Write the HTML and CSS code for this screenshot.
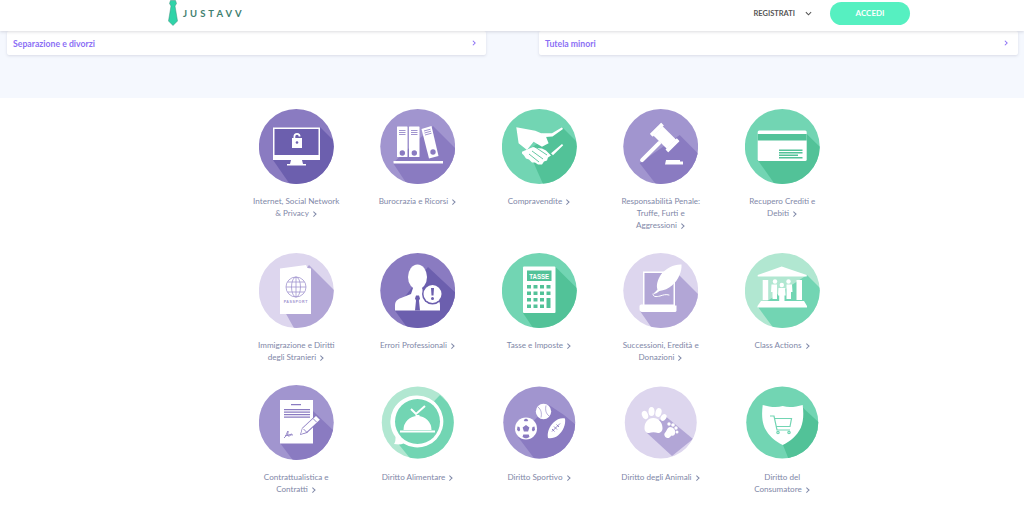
FILE: index.html
```html
<!DOCTYPE html>
<html>
<head>
    <meta charset="utf-8">
    <title>JustAvv</title>
    <meta name="viewport" content="width=device-width, initial-scale=1.0">
    <link rel="stylesheet" href="styles.css">
</head>
<body>
    <header class="topbar">
        <a class="logo">
            <svg class="logo-tie" viewBox="0 0 10 26">
                <path d="M2.500 0.500h5l1 3-1.500 2.500 2.500 15-4.500 4.500-4.500-4.500 2.500-15-1.500-2.500z"/>
            </svg>
            <span class="logo-name">JUSTAVV</span>
        </a>
        <nav class="topnav">
            <span class="register">REGISTRATI</span>
            <svg class="register-arrow" viewBox="0 0 8 5"><path d="M1 1l3 3 3-3"/></svg>
            <a class="login">ACCEDI</a>
        </nav>
    </header>

    <section class="band">
        <a class="card"><span>Separazione e divorzi</span><svg class="card-arrow" viewBox="0 0 5 8"><path d="M1 1l3 3-3 3"/></svg></a>
        <a class="card"><span>Tutela minori</span><svg class="card-arrow" viewBox="0 0 5 8"><path d="M1 1l3 3-3 3"/></svg></a>
    </section>

    <main class="areas">
        <a class="area">
            <svg class="area-icon violet" viewBox="0 0 75 75">
                <polygon class="sh" points="61,18 110,67 60,117 14,51"/>
                <rect class="sh" x="15" y="19.500" width="45" height="27"/>
                <path fill-rule="evenodd" d="M14 18.500h47v32.500h-18l1 4h3v1.500h-19v-1.500h3l1-4h-18zM15.500 20v26h44v-26z"/>
                <path d="M33 29h10v10h-10zM34.500 29v-1.500a3.500 3.500 0 0 1 7 0h-1.800a1.700 1.700 0 0 0-3.400 0v1.500z"/>
                <circle class="sh" cx="38" cy="33.500" r="1.300"/>
            </svg>
            <span class="area-label">Internet, Social Network<br>&amp; Privacy <i></i></span>
        </a>
        <a class="area">
            <svg class="area-icon lilac" viewBox="0 0 75 75">
                <polygon class="sh" points="53,17 100,64 50,110 13,54"/>
                <rect x="17" y="17.500" width="10.500" height="30.500" rx="0.500"/>
                <rect x="29" y="17.500" width="10.500" height="30.500" rx="0.500"/>
                <polygon points="41.500,20 51.500,17 58.500,47 49,49.500"/>
                <rect x="13.500" y="52" width="49.500" height="2.500"/>
                <circle class="sh" cx="22.300" cy="44" r="2.700"/>
                <circle class="sh" cx="34.300" cy="44" r="2.700"/>
                <circle class="sh" cx="53" cy="43" r="2.700"/>
                <path class="line" d="M19 21.500h6.500M19 23.500h6.500M19 25.500h6.500M31 21.500h6.500M31 23.500h6.500M31 25.500h6.500M44 22l6.500-1.800M44.500 24l6.500-1.800M45 26l6.500-1.800"/>
            </svg>
            <span class="area-label">Burocrazia e Ricorsi <i></i></span>
        </a>
        <a class="area">
            <svg class="area-icon green" viewBox="0 0 75 75">
                <polygon class="sh" points="60,18 110,68 60,118 26,41"/>
                <path d="M14.300 18.300l19 3.400 10 4.300 3.300 8.300-6.600 3.400-8.400-5-6.600 8.300-8.400-6.700z"/>
                <path d="M39 24.300h11l10-6 1 1.700-10.500 7.500-7.500 0.500z"/>
                <path d="M60 35l1.200 1.300-10.200 10-2-2z"/>
                <path d="M20 42.700l11-4.700 4 1 5 0.500 4 2 5 5-3 2-1 3-3 1-2 3h-4l-3-2-3 0-3-3-3-1-2-3-2-2z"/>
                <path class="sh-line" d="M30 42l11 8M27 45l10 8M33 38l12 8"/>
            </svg>
            <span class="area-label">Compravendite <i></i></span>
        </a>
        <a class="area">
            <svg class="area-icon lilac" viewBox="0 0 75 75">
                <polygon class="sh" points="56.700,26 100,70 60,110 16.700,54.300"/>
                <g transform="translate(41.700 28.500) rotate(45)">
                    <rect x="-13" y="-8" width="4" height="16" rx="0.500"/>
                    <rect x="-9.500" y="-6.500" width="19" height="13"/>
                    <rect x="9" y="-8" width="4" height="16" rx="0.500"/>
                    <rect x="-2" y="6" width="4" height="28" rx="2"/>
                </g>
                <path d="M43 51h14v1.500h3v3h-18z"/>
            </svg>
            <span class="area-label">Responsabilità Penale:<br>Truffe, Furti e<br>Aggressioni <i></i></span>
        </a>
        <a class="area">
            <svg class="area-icon green" viewBox="0 0 75 75">
                <polygon class="sh" points="61.700,25 110,72 60,118 12.700,51"/>
                <rect x="12.700" y="21.500" width="49" height="30.500" rx="1.500"/>
                <rect class="sh" x="12.700" y="25" width="49" height="6.500"/>
                <path class="sh" d="M34 40.500h23.500v1.400h-23.500zM34 43h23.500v1.400h-23.500zM34 45.500h19v1.400h-19zM34 48h23.500v1.400h-23.500z"/>
            </svg>
            <span class="area-label">Recupero Crediti e<br>Debiti <i></i></span>
        </a>

        <a class="area">
            <svg class="area-icon pale" viewBox="0 0 75 75">
                <polygon class="sh" points="50,12 110,72 60,120 21,50"/>
                <path d="M21 15.500l26-3.500 1.500 3 3.500 0.500v45.500h-31z"/>
                <g class="globe">
                    <circle cx="37" cy="34" r="10"/>
                    <ellipse cx="37" cy="34" rx="4.500" ry="10"/>
                    <path d="M27 34h20M28.500 29h17M28.500 39h17M37 24v20"/>
                </g>
                <text class="passport" x="36.800" y="49.500">PASSPORT</text>
            </svg>
            <span class="area-label">Immigrazione e Diritti<br>degli Stranieri <i></i></span>
        </a>
        <a class="area">
            <svg class="area-icon violet" viewBox="0 0 75 75">
                <polygon class="sh" points="48,14 110,72 60,120 14.500,57"/>
                <ellipse cx="37.500" cy="24" rx="9.500" ry="12.500"/>
                <path d="M15 57.500v-5c0-4 2-6 6-7.500l10-4 2-6h9l2 6 10 4c4 1.500 6 3.500 6 7.500v5z"/>
                <path class="sh" d="M36 42.500h3l1 3-1 2 1 10h-5l1-10-1-2z"/>
                <circle class="sh" cx="52.500" cy="41" r="10.500"/>
                <circle cx="52.500" cy="41" r="9"/>
                <path class="sh" d="M51 35h3l-0.500 7.500h-2zM52.500 44a1.500 1.500 0 1 1 0 3 1.500 1.500 0 0 1 0-3z"/>
            </svg>
            <span class="area-label">Errori Professionali <i></i></span>
        </a>
        <a class="area">
            <svg class="area-icon green" viewBox="0 0 75 75">
                <polygon class="sh" points="53,13.500 110,70 60,118 21,60"/>
                <rect x="21" y="13.500" width="32.500" height="46.500" rx="1"/>
                <rect class="sh" x="25" y="17.500" width="24.500" height="10.500"/>
                <text class="calc-text" x="37.200" y="25.800" textLength="20" lengthAdjust="spacingAndGlyphs">TASSE</text>
                <path class="sh" d="M25 32h4v3.500h-4zM31.500 32h4v3.500h-4zM38 32h4v3.500h-4zM44.500 32h4v3.500h-4zM25 38.500h4v3.500h-4zM31.500 38.500h4v3.500h-4zM38 38.500h4v3.500h-4zM44.500 38.500h4v3.500h-4zM25 45h4v3.500h-4zM31.500 45h4v3.500h-4zM38 45h4v3.500h-4zM44.500 45h4v10h-4zM25 51.500h4v3.500h-4zM31.500 51.500h4v3.500h-4zM38 51.500h4v3.500h-4z"/>
            </svg>
            <span class="area-label">Tasse e Imposte <i></i></span>
        </a>
        <a class="area">
            <svg class="area-icon pale" viewBox="0 0 75 75">
                <polygon class="sh" points="52,18 110,76 60,120 17,58"/>
                <rect class="sh" x="20.500" y="19" width="31" height="33"/>
                <path fill-rule="evenodd" d="M20 18.500h32v34h1.500v5c0 1-1 1.500-2 1.500h-32.500c-1.500 0-2.500-1-2.500-3v-2.500c0-1.500 1-2 2.500-2h1zM21.500 20v31.500h29v-31.500z"/>
                <path d="M58.500 11.500c0.500 7-3 15.500-9.500 21-3.500 3-8 5-12.500 5.500-2 1.500-3.500 2.500-5.500 3l-0.500-0.500c1.500-1.200 3-2.500 4-4-1.500-4 0-10 3.500-15 5-6.500 13.500-10.500 20.500-10z"/>
                <path class="stroke thin" d="M30 41c0 3 3 3 7 2 3-1 6-2 9-1"/>
            </svg>
            <span class="area-label">Successioni, Eredità e<br>Donazioni <i></i></span>
        </a>
        <a class="area">
            <svg class="area-icon mint" viewBox="0 0 75 75">
                <polygon class="sh" points="62,22 110,70 60,118 13,54"/>
                <path d="M36.700 13.500l25 8.500v1.500h-49v-1.500z"/>
                <rect x="17.700" y="27" width="5.500" height="20"/>
                <rect x="51.500" y="27" width="5.500" height="20"/>
                <path d="M16 48h43l3 5v1.500h-49.500v-1.500z"/>
                <circle cx="30" cy="28.500" r="2.200"/>
                <circle cx="43.500" cy="28.500" r="2.200"/>
                <circle cx="36.800" cy="32" r="2.200"/>
                <path d="M26.500 31.500h5.500v14.500h-4.500v-7h-1.500zM41.500 31.500h5.500l0.500 7.500h-1.500v7h-4.500z"/>
                <path d="M33.500 35h6.700l0.500 7.500h-1.200v6h-5.300v-6h-1.200z"/>
            </svg>
            <span class="area-label">Class Actions <i></i></span>
        </a>

        <a class="area">
            <svg class="area-icon lilac" viewBox="0 0 75 75">
                <polygon class="sh" points="54,26 100,70 60,110 21,58"/>
                <rect x="21" y="15" width="33" height="43.500"/>
                <path class="sh" d="M32 19h10v1.200h-10zM25 24h26v1.200h-26zM25 26.500h26v1.200h-26zM25 29h26v1.200h-26zM25 31.500h26v1.200h-26z"/>
                <path class="pen-back" d="M41 50l2-7 14-13 5 5-14 13z"/>
                <path d="M42 49l1.500-5.500 13.500-12.500 3.800 3.800-13.500 12.500z"/>
                <path class="sh-line" d="M54 33.500l3.800 3.800M44.500 44l3.500 3.500"/>
                <path class="sh-line" d="M25 53c2-1 3-6 4-7 0.500 1-1 4 0 5 2 0.500 3-2 5-1M26 51l7-2"/>
            </svg>
            <span class="area-label">Contrattualistica e<br>Contratti <i></i></span>
        </a>
        <a class="area">
            <svg class="area-icon mint small" viewBox="0 0 75 75">
                <polygon class="sh" points="60,10 110,60 60,110 16,56"/>
                <path fill-rule="evenodd" d="M37.500 10.500a26 26 0 1 1-14 48c-3 1.500-6 1-9.500 0.500 1.500-2 1.500-4 1.500-7a26 26 0 0 1 22-41.500z"/>
                <circle class="sh" cx="37.500" cy="36.500" r="22.500"/>
                <path class="check" d="M31 24l5 5 9-8"/>
                <path d="M23.500 45a14 14 0 0 1 28 0zM35.500 30h4v2h-4zM20 45.500h35v2h-35z"/>
            </svg>
            <span class="area-label">Diritto Alimentare <i></i></span>
        </a>
        <a class="area">
            <svg class="area-icon lilac small" viewBox="0 0 75 75">
                <polygon class="sh" points="47,20 62,30 110,70 60,110 16,52"/>
                <circle cx="24" cy="43.500" r="11"/>
                <path class="sh" d="M24 40l3.400 2.500-1.300 4h-4.200l-1.300-4zM24 33.500l2.300 1.500-0.800 1.200h-3l-0.800-1.200zM15.500 41.500l2 0.500 0.700 3-1.200 1.500-2-1.600zM32.500 41.500l-2 0.500-0.700 3 1.200 1.500 2-1.600zM20.500 52l0.800-2.500h5.400l0.800 2.500-2.500 1.300h-2z"/>
                <circle cx="41.500" cy="26.500" r="7.700"/>
                <path class="sh-line fine" d="M36 22c3 2.500 4 6 3 10.500M47 31c-3-2.500-4-6-3-10.500"/>
                <path d="M63 33.500c1 6-2 13-7 17-3 2.500-7 3-10 2.500-1-5 1-11 5.500-15.500 3.500-3.500 8-5 11.500-4z"/>
                <path class="sh-line" d="M50 46.500l8-8M52 41.500l3 3M50 44l2.500 2.500M54.500 39.500l2.500 2.500"/>
            </svg>
            <span class="area-label">Diritto Sportivo <i></i></span>
        </a>
        <a class="area">
            <svg class="area-icon pale small" viewBox="0 0 75 75">
                <polygon class="sh" points="41,30 70,54 49,71 24,48"/>
                <ellipse cx="22" cy="30" rx="3" ry="4.300" transform="rotate(-20 22 30)"/>
                <ellipse cx="28.500" cy="26.500" rx="3" ry="4.500"/>
                <ellipse cx="35.500" cy="27.500" rx="3" ry="4.500" transform="rotate(15 35.500 27.500)"/>
                <ellipse cx="40.500" cy="32.500" rx="2.600" ry="3.800" transform="rotate(35 40.500 32.500)"/>
                <path d="M30.500 33c5 0 9 4.500 9 10 0 3.500-2 5-4.500 5-1.500 0-3-0.700-4.500-0.700s-3 0.700-4.500 0.700c-2.500 0-4.500-1.500-4.500-5 0-5.500 3.500-10 8.500-10z"/>
                <circle cx="46" cy="39" r="1.700"/>
                <circle cx="50" cy="40" r="1.800"/>
                <circle cx="53" cy="43" r="1.700"/>
                <circle cx="54" cy="47" r="1.500"/>
                <path d="M47 42c3.500 0 6 3 5 6.500-0.500 2-2 2.500-3.500 2l-2 2c-1.500 1-3.500 0.500-4.500-1-1.500-2-0.500-3.500 1-5 1-2 2-4.500 4-4.500z"/>
            </svg>
            <span class="area-label">Diritto degli Animali <i></i></span>
        </a>
        <a class="area">
            <svg class="area-icon green small" viewBox="0 0 75 75">
                <polygon class="sh" points="57,22 110,70 60,115 38,60"/>
                <path d="M17.700 20c7 2 14 3 20 1 6 2 13 1 20-1 1 8 1 16-2 23-4 8-10 13-18 17-8-4-14-9-18-17-3-7-3-15-2-23z"/>
                <g class="cart">
                    <path d="M25 31h4l3 14h13"/>
                    <path d="M29.500 33.500h17l-1.500 8h-14"/>
                    <circle cx="33" cy="47.500" r="1.200"/>
                    <circle cx="44" cy="47.500" r="1.200"/>
                </g>
            </svg>
            <span class="area-label">Diritto del<br>Consumatore <i></i></span>
        </a>
    </main>
</body>
</html>
```
FILE: styles.css
```css
* {
    box-sizing: border-box;
}

html, body {
    height: 509px;
}

body {
    margin: 0;
    background-color: white;
    font-family: 'Lato', 'Open Sans', sans-serif;
    overflow: hidden;
}

.topbar {
    position: relative;
    z-index: 10;
    height: 31px;
    padding: 0 114px 0 168px;
    display: flex;
    align-items: center;
    justify-content: space-between;
    background-color: white;
    box-shadow: 0 1px 3px rgba(60, 60, 80, 0.18);
}

.logo {
    display: flex;
    align-items: center;
    gap: 5px;
    margin-top: -5px;
}

.logo-tie {
    width: 10px;
    height: 26px;
    fill: #2fd3a8;
    stroke: #3f8f7c;
    stroke-width: 0.5;
}

.logo-name {
    font-size: 9.500px;
    font-weight: 700;
    letter-spacing: 3px;
    color: #3f7f70;
}

.topnav {
    display: flex;
    align-items: center;
    margin-top: -5px;
}

.register {
    font-size: 7.500px;
    font-weight: 700;
    color: #555;
}

.register-arrow {
    width: 7px;
    height: 5px;
    margin: 0 18px 0 10px;
    fill: none;
    stroke: #555;
    stroke-width: 1.200;
}

.login {
    width: 80px;
    height: 23px;
    border-radius: 12px;
    background-color: #56f0c1;
    color: white;
    font-size: 8px;
    font-weight: 700;
    line-height: 23px;
    text-align: center;
}

.band {
    height: 67px;
    padding: 0 6px 0 7px;
    display: flex;
    gap: 53px;
    background-color: #f5f8fe;
}

.card {
    flex: 1;
    height: 24px;
    padding: 0 10px 0 6px;
    display: flex;
    align-items: center;
    justify-content: space-between;
    background-color: white;
    border-radius: 2px;
    box-shadow: 0 1px 3px rgba(60, 60, 100, 0.15);
    color: #8b6ff5;
    font-size: 8.700px;
    font-weight: 700;
}

.card-arrow {
    width: 4px;
    height: 6px;
    fill: none;
    stroke: #8b6ff5;
    stroke-width: 1.400;
}

.areas {
    margin-left: 235.500px;
    padding-top: 11px;
    display: grid;
    grid-template-columns: repeat(5, 121.500px);
    row-gap: 22px;
}

.area {
    display: flex;
    flex-direction: column;
    align-items: center;
    gap: 11px;
}

.area-icon {
    width: 75px;
    height: 75px;
    display: block;
    fill: white;
    background-color: var(--bg);
    clip-path: circle(37.500px);
}

.area-icon.small {
    clip-path: circle(36px);
}

.violet { --bg: #8a7bc1; --sh: #6c5fae; }
.lilac  { --bg: #a195cf; --sh: #8a7bc1; }
.pale   { --bg: #ddd6ee; --sh: #b2a6d6; }
.green  { --bg: #72d5b3; --sh: #52c298; }
.mint   { --bg: #b1e7d1; --sh: #72d5b3; }

.sh {
    fill: var(--sh);
}

.line {
    fill: none;
    stroke: var(--bg);
    stroke-width: 1;
}

.sh-line {
    fill: none;
    stroke: var(--sh);
    stroke-width: 0.900;
}

.sh-line.fine {
    stroke-width: 0.600;
}

.stroke {
    fill: none;
    stroke: white;
    stroke-width: 4;
    stroke-linecap: round;
}

.stroke.thin {
    stroke-width: 1;
}

.globe {
    fill: none;
    stroke: #a195cf;
    stroke-width: 0.800;
}

.passport {
    fill: #a195cf;
    font-family: 'Liberation Sans', sans-serif;
    font-size: 3.600px;
    font-weight: 700;
    letter-spacing: 0.600px;
    text-anchor: middle;
}

.calc-text {
    fill: white;
    font-family: 'Liberation Sans', sans-serif;
    font-size: 8px;
    font-weight: 700;
    text-anchor: middle;
}

.pen-back {
    fill: var(--sh);
}

.check {
    fill: none;
    stroke: white;
    stroke-width: 2;
}

.cart {
    fill: none;
    stroke: #72d5b3;
    stroke-width: 1.200;
}

.area-label {
    font-size: 8.100px;
    line-height: 12px;
    color: #7f88a8;
    text-align: center;
}

.area-label i {
    display: inline-block;
    width: 3.500px;
    height: 3.500px;
    margin: 0 2px 1px 1px;
    border-top: 1px solid #7f88a8;
    border-right: 1px solid #7f88a8;
    transform: rotate(45deg);
}
```
